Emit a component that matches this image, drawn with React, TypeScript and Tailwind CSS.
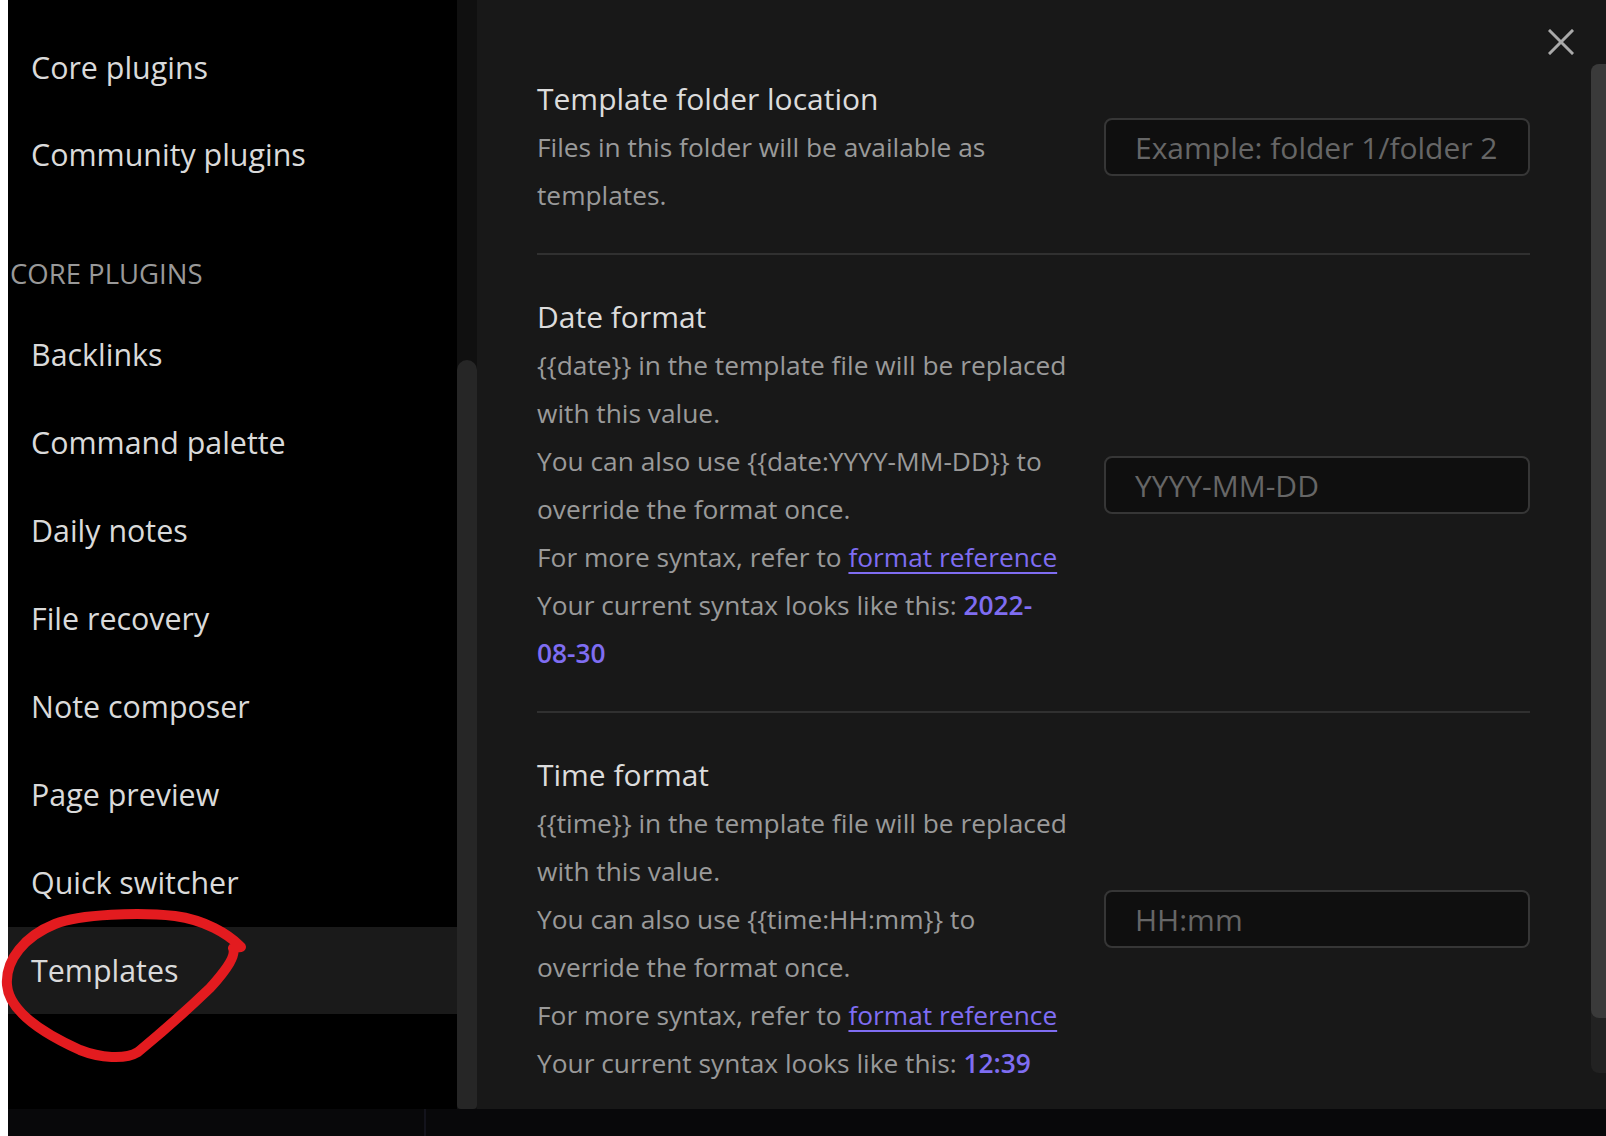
import React from "react";

const Link = ({ children }: { children: React.ReactNode }) => (
  <span className="text-[#7f6df2] underline decoration-[#7f6df2] underline-offset-[5px] decoration-[2px]">{children}</span>
);
const Val = ({ children }: { children: React.ReactNode }) => (
  <span className="text-[#7f6df2] font-semibold">{children}</span>
);

function Setting({
  title,
  lines,
  placeholder,
  last,
}: {
  title: string;
  lines: React.ReactNode[];
  placeholder: string;
  last?: boolean;
}) {
  return (
    <div
      className={
        "flex items-center justify-between pt-[38px] pb-[34px] " +
        (last ? "" : "border-b-2 border-[#303030]")
      }
    >
      <div className="flex flex-col">
        <div className="text-[30px] leading-[48px] text-[#dcdcdc] whitespace-nowrap">{title}</div>
        {lines.map((l, i) => (
          <div key={i} className="text-[26.3px] leading-[48px] text-[#9a9a9a] whitespace-nowrap">
            {l}
          </div>
        ))}
      </div>
      <div className="w-[426px] h-[58px] shrink-0 rounded-[8px] border-2 border-[#363636] bg-[#0f0f0f] flex items-center pl-[29px] text-[30px] text-[#666666] whitespace-nowrap">
        {placeholder}
      </div>
    </div>
  );
}

export default function App() {
  const items = [
    "Backlinks",
    "Command palette",
    "Daily notes",
    "File recovery",
    "Note composer",
    "Page preview",
    "Quick switcher",
  ];
  return (
    <div className="relative w-[1606px] h-[1136px] bg-white overflow-hidden font-['Open_Sans',sans-serif]">
      <div className="flex h-[1109px] ml-[8px]">
        {/* sidebar */}
        <div className="w-[449px] bg-black flex flex-col pt-[24px]">
          <div className="h-[87px] flex items-center pl-[23px] text-[30.4px] text-[#dadada]">Core plugins</div>
          <div className="h-[88px] flex items-center pl-[23px] text-[30.4px] text-[#dadada]">Community plugins</div>
          <div className="h-[112px] pt-[57px] pl-[2px] leading-[36px] text-[27.5px] text-[#999999]">CORE PLUGINS</div>
          {items.map((t) => (
            <div key={t} className="h-[88px] flex items-center pl-[23px] text-[30.4px] text-[#dadada]">
              {t}
            </div>
          ))}
          <div className="h-[87px] flex items-center pl-[23px] text-[30.4px] text-[#dadada] bg-[#1a1a1a]">Templates</div>
        </div>
        {/* sidebar scrollbar */}
        <div className="w-[20px] bg-[#101010] flex flex-col">
          <div className="mt-[360px] flex-1 bg-[#262626] rounded-t-[10px] rounded-b-[4px]" />
        </div>
        {/* content */}
        <div className="relative flex-1 bg-[#181818] overflow-hidden">
          <div className="pl-[60px] pr-[76px] pt-[37px]">
            <Setting
              title="Template folder location"
              lines={["Files in this folder will be available as", "templates."]}
              placeholder="Example: folder 1/folder 2"
            />
            <Setting
              title="Date format"
              lines={[
                <>{"{{date}}"} in the template file will be replaced</>,
                "with this value.",
                <>You can also use {"{{date:YYYY-MM-DD}}"} to</>,
                "override the format once.",
                <>
                  For more syntax, refer to <Link>format reference</Link>
                </>,
                <>
                  Your current syntax looks like this: <Val>2022-</Val>
                </>,
                <Val>08-30</Val>,
              ]}
              placeholder="YYYY-MM-DD"
            />
            <Setting
              title="Time format"
              lines={[
                <>{"{{time}}"} in the template file will be replaced</>,
                "with this value.",
                <>You can also use {"{{time:HH:mm}}"} to</>,
                "override the format once.",
                <>
                  For more syntax, refer to <Link>format reference</Link>
                </>,
                <>
                  Your current syntax looks like this: <Val>12:39</Val>
                </>,
              ]}
              placeholder="HH:mm"
              last
            />
          </div>
          {/* close */}
          <div className="absolute right-[32px] top-[29px] w-[26px] h-[26px]">
            <svg width="26" height="26" viewBox="0 0 26 26">
              <path d="M2 2 L24 24 M24 2 L2 24" stroke="#a9a9a9" strokeWidth="3" strokeLinecap="square" />
            </svg>
          </div>
          {/* right scrollbar */}
          <div className="absolute right-0 top-[64px] w-[15px] h-[1009px] bg-[#222222] rounded-l-[8px]">
            <div className="h-[954px] bg-[#3a3a3a] rounded-l-[8px]" />
          </div>
        </div>
      </div>
      <div className="relative h-[27px] ml-[8px] bg-[#08080a]">
        <div className="absolute left-[416px] top-0 w-[2px] h-full bg-[#13131c]" />
      </div>
      {/* red annotation */}
      <svg className="absolute left-0 top-0 pointer-events-none" width="1606" height="1136" viewBox="0 0 1606 1136">
        <path
          d="M240 946 C228 934 205 920 175 916 C140 912 80 914 55 924 C25 936 5 960 7 985 C9 1010 40 1032 80 1050 C100 1058 125 1060 138 1052 C155 1038 185 1012 210 988 C228 968 236 955 233 948 L241 947"
          fill="none"
          stroke="#e31b1f"
          strokeWidth="10"
          strokeLinecap="round"
          strokeLinejoin="round"
        />
      </svg>
    </div>
  );
}
